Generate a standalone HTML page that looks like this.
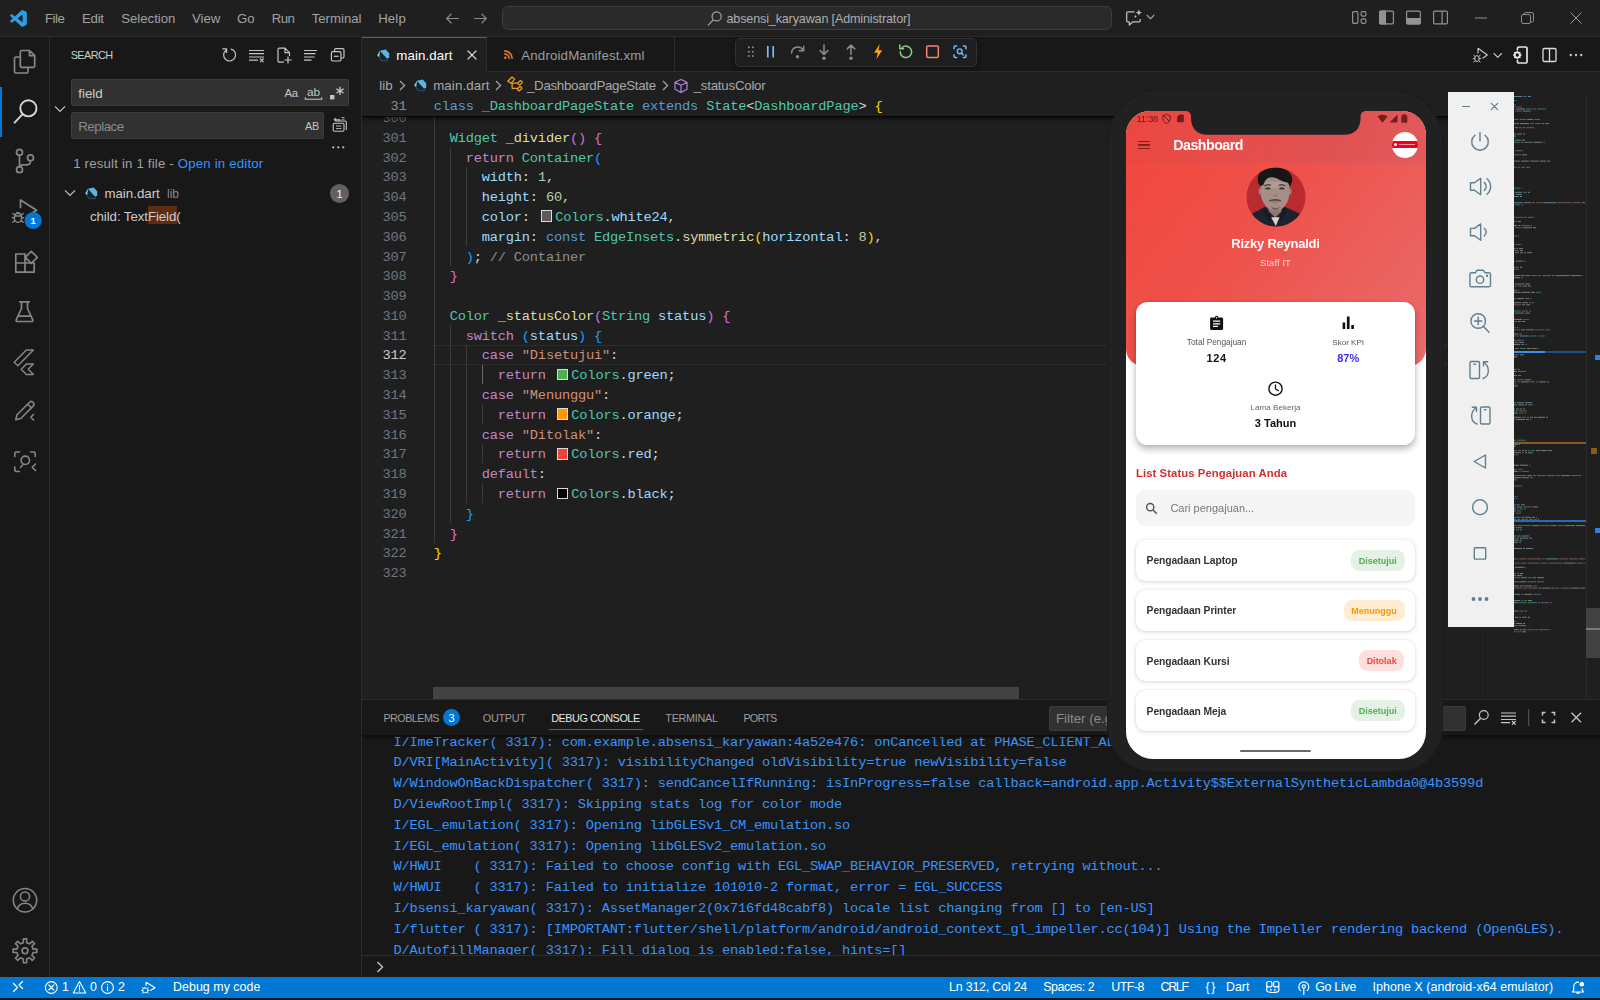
<!DOCTYPE html>
<html lang="en">
<head>
<meta charset="utf-8">
<title>absensi_karyawan - Visual Studio Code</title>
<style>
*{box-sizing:border-box;margin:0;padding:0}
html,body{width:1600px;height:1000px;overflow:hidden;background:#1f1f1f}
body{position:relative;font-family:"Liberation Sans",sans-serif;font-size:13px;color:#ccc;-webkit-font-smoothing:antialiased}
.abs{position:absolute}
svg{display:block;overflow:visible}
.t{position:absolute;white-space:pre;line-height:1}
/* ---------- title bar ---------- */
#titlebar{position:absolute;left:0;top:0;width:1600px;height:37px;background:#1f1f1f;border-bottom:1px solid #2b2b2b}
#titlebar .menu{position:absolute;top:12.2px;font-size:13.2px;color:#a2a2a2;line-height:14px;white-space:pre}
#cmd{position:absolute;left:502px;top:6px;width:610px;height:24px;border:1px solid #3d3d3d;border-radius:6px;background:#2a2a2a}
/* ---------- activity bar ---------- */
#activity{position:absolute;left:0;top:37px;width:50px;height:940px;background:#181818;border-right:1px solid #2b2b2b}
/* ---------- sidebar ---------- */
#sidebar{position:absolute;left:50px;top:37px;width:312px;height:940px;background:#181818;border-right:1px solid #2b2b2b}
.inp{position:absolute;background:#313131;border:1px solid #3c3c3c;border-radius:2px}
/* ---------- editor ---------- */
#tabs{position:absolute;left:362px;top:37px;width:1238px;height:35px;background:#181818;border-bottom:1px solid #2b2b2b}
#editor{position:absolute;left:362px;top:72px;width:1238px;height:627px;background:#1f1f1f;overflow:hidden}
.code{font-family:"Liberation Mono",monospace;font-size:13.7px;letter-spacing:-.201px;white-space:pre;line-height:19.79px;color:#d4d4d4}
.ln{position:absolute;left:0;width:44.5px;text-align:right;color:#6e7681;font-family:"Liberation Mono",monospace;font-size:13.7px;letter-spacing:-.201px;line-height:19.79px;white-space:pre}
.cl{position:absolute;left:71.7px;height:19.79px}
.k{color:#569cd6}.c{color:#4ec9b0}.f{color:#dcdcaa}.p{color:#c586c0}.v{color:#9cdcfe}.n{color:#b5cea8}.s{color:#ce9178}
.b1{color:#ffd700}.b2{color:#da70d6}.b3{color:#179fff}.cm{color:#8e8e8e}
.sw{display:inline-block;width:11.7px;height:11.7px;border:1.2px solid #dcdcdc;vertical-align:-1.2px;margin:0 2.9px 0 2.9px}
.g{position:absolute;width:1px;background:#3a3a3a}
/* ---------- panel ---------- */
#panel{position:absolute;left:362px;top:699px;width:1238px;height:278px;background:#181818;border-top:1px solid #2b2b2b;overflow:hidden}
.ptab{position:absolute;top:11.5px;font-size:10.8px;color:#9d9d9d;line-height:13px;white-space:pre}
.con{position:absolute;left:31.4px;font-family:"Liberation Mono",monospace;font-size:13.7px;letter-spacing:-.201px;line-height:20.83px;white-space:pre;color:#3794ff}
/* ---------- status ---------- */
#status{position:absolute;left:0;top:977px;width:1600px;height:23px;background:#0078d4;color:#fff;border-bottom:2px solid #15181c}
#status .s{position:absolute;top:4px;font-size:12.4px;line-height:13px;color:#fff;white-space:pre}
/* ---------- phone ---------- */
#phone{position:absolute;left:1108px;top:90px;width:334px;height:681px;background:#212121;border-radius:52px 52px 44px 44px;box-shadow:0 0 0 1px #1b1b1b}
#screen{will-change:transform;position:absolute;left:18px;top:22.5px;width:300px;height:647px;background:#fff;border-radius:24px 24px 27px 27px;overflow:hidden;font-family:"Liberation Sans",sans-serif}
#emu{position:absolute;left:1448px;top:92px;width:66px;height:535px;background:#f0f0f0}
</style>
</head>
<body>
<div id="titlebar">
  <svg class="abs" style="left:10px;top:9.5px" width="16.8" height="16.8" viewBox="0 0 100 100"><path fill-rule="evenodd" fill="#2a9fe9" d="M70.9 99.3c1.6.6 3.4.6 5-.2l20.6-9.9c2.1-1 3.5-3.2 3.5-5.6V16.4c0-2.4-1.4-4.6-3.5-5.6L75.9.9c-2.1-1-4.6-.8-6.4.6-.3.2-.5.4-.7.6L29.4 38 12.2 25c-1.6-1.2-3.8-1.1-5.3.2l-5.5 5c-1.8 1.7-1.8 4.5 0 6.2L16.200 50 1.400 63.600c-1.800 1.600-1.800 4.500 0 6.100l5.500 5c1.500 1.400 3.700 1.500 5.300.3l17.200-13L68.800 97.900c.600.600 1.300 1.100 2.100 1.400zM75 27.300L45.100 50 75 72.700z"/></svg>
  <span class="menu" style="left:45px;letter-spacing:-.45px">File</span>
  <span class="menu" style="left:82px;letter-spacing:-.24px">Edit</span>
  <span class="menu" style="left:121.2px">Selection</span>
  <span class="menu" style="left:192px">View</span>
  <span class="menu" style="left:237px">Go</span>
  <span class="menu" style="left:271.7px;letter-spacing:-.57px">Run</span>
  <span class="menu" style="left:311.7px">Terminal</span>
  <span class="menu" style="left:378.2px;letter-spacing:.16px">Help</span>
  <svg class="abs" style="left:444px;top:10px" width="17" height="17" viewBox="0 0 16 16" fill="none" stroke="#8a8a8a" stroke-width="1.1"><path d="M14 8H2.500M7 3.500L2.500 8 7 12.500"/></svg>
  <svg class="abs" style="left:471.500px;top:10px" width="17" height="17" viewBox="0 0 16 16" fill="none" stroke="#8a8a8a" stroke-width="1.1"><path d="M2 8h11.500M9 3.500L13.500 8 9 12.500"/></svg>
  <div id="cmd">
    <svg class="abs" style="left:203px;top:3px" width="17" height="17" viewBox="0 0 16 16" fill="none" stroke="#a8a8a8" stroke-width="1.1"><circle cx="10" cy="6" r="4.300"/><path d="M7 9.200L1.800 14.500"/></svg>
    <span class="t" style="left:223.500px;top:4.500px;font-size:12.600px;color:#adadad;line-height:14px;letter-spacing:-.16px">absensi_karyawan [Administrator]</span>
  </div>
  <!-- copilot chat icon -->
  <svg class="abs" style="left:1125px;top:8.500px" width="18" height="18" viewBox="0 0 16 16" fill="none" stroke="#c0c0c0" stroke-width="1.100" stroke-linejoin="round"><path d="M8.500 2.500H2.500a1 1 0 0 0-1 1v7a1 1 0 0 0 1 1h1.300v2.800l3-2.800h5.700a1 1 0 0 0 1-1V8.800"/><path fill="#c0c0c0" stroke="none" d="M12.300.400l.8 2 2 .8-2 .8-.8 2-.8-2-2-.8 2-.8z"/><path fill="#c0c0c0" stroke="none" d="M9.300 5.200l.4 1 .9.400-.9.400-.4 1-.4-1-.9-.400.9-.400z"/></svg>
  <svg class="abs" style="left:1146px;top:14px" width="9" height="6" viewBox="0 0 9 6" fill="none" stroke="#a0a0a0" stroke-width="1.100"><path d="M.8 1l3.700 3.700L8.200 1"/></svg>
  <!-- layout icons -->
  <svg class="abs" style="left:1351px;top:9px" width="17" height="17" viewBox="0 0 16 16" fill="none" stroke="#939393" stroke-width="1.100"><rect x="1.500" y="2.500" width="5" height="11" rx="1.200"/><rect x="9.500" y="2.500" width="4.600" height="4.200" rx="1.400"/><rect x="9.500" y="9.300" width="4.600" height="4.200" rx="1.400"/></svg>
  <svg class="abs" style="left:1378px;top:9px" width="17" height="17" viewBox="0 0 16 16" fill="none" stroke="#939393" stroke-width="1.100"><rect x="1.500" y="2" width="13" height="12" rx="1.200"/><path fill="#939393" d="M1.500 3.200a1.200 1.200 0 0 1 1.200-1.200H7v12H2.700a1.200 1.200 0 0 1-1.200-1.200z"/></svg>
  <svg class="abs" style="left:1405px;top:9px" width="17" height="17" viewBox="0 0 16 16" fill="none" stroke="#939393" stroke-width="1.100"><rect x="1.500" y="2" width="13" height="12" rx="1.200"/><path fill="#939393" d="M1.500 9h13v3.800a1.200 1.200 0 0 1-1.200 1.200H2.700a1.200 1.200 0 0 1-1.200-1.200z"/></svg>
  <svg class="abs" style="left:1432px;top:9px" width="17" height="17" viewBox="0 0 16 16" fill="none" stroke="#939393" stroke-width="1.100"><rect x="1.500" y="2" width="13" height="12" rx="1.200"/><path d="M9.500 2v12"/></svg>
  <!-- window controls -->
  <svg class="abs" style="left:1475px;top:17px" width="12" height="2" viewBox="0 0 12 2"><path d="M0 1h12" stroke="#8c8c8c" stroke-width="1"/></svg>
  <svg class="abs" style="left:1521px;top:11.500px" width="13" height="12" viewBox="0 0 13 12" fill="none" stroke="#8c8c8c" stroke-width="1"><rect x=".5" y="2.500" width="9" height="9" rx="1.500"/><path d="M3 2.500V2A1.500 1.500 0 0 1 4.500.5H11A1.500 1.500 0 0 1 12.500 2v6.500A1.500 1.500 0 0 1 11 10h-1"/></svg>
  <svg class="abs" style="left:1570px;top:12px" width="12" height="12" viewBox="0 0 12 12" fill="none" stroke="#9a9a9a" stroke-width="1"><path d="M.5.500l11 11M11.500.500l-11 11"/></svg>
</div>

<div id="activity">
  <div class="abs" style="left:0;top:50px;width:2px;height:50px;background:#0078d4"></div>
  <svg class="abs" style="left:0;top:0" width="50" height="940" viewBox="0 0 50 940" fill="none" stroke="#868686" stroke-width="1.7" stroke-linejoin="round" stroke-linecap="round">
    <!-- explorer -->
    <path d="M22 13.500H29.500L34.700 18.700V28.800a1.500 1.500 0 0 1-1.500 1.500H21.800a1.500 1.500 0 0 1-1.500-1.500V15a1.500 1.500 0 0 1 1.500-1.500zM29.500 13.500V18.700H34.700M20.300 20H16a1.500 1.500 0 0 0-1.500 1.500V34.500a1.500 1.500 0 0 0 1.500 1.500H26.500a1.500 1.500 0 0 0 1.500-1.500V30.300"/>
    <!-- search (active) -->
    <g stroke="#d7d7d7" stroke-width="1.900"><circle cx="28.400" cy="71.300" r="8.100"/><path d="M22.600 77.200L14.600 85.600"/></g>
    <!-- scm -->
    <circle cx="19.500" cy="115.300" r="3"/><circle cx="30.500" cy="120.800" r="3"/><circle cx="19.500" cy="132.700" r="3"/>
    <path d="M19.500 118.300V129.700M30.500 123.800v.4q0 3.600-4 3.600h-3q-4 0-4 2"/>
    <!-- debug -->
    <path d="M20.500 170.500V163L36.600 173.200L32.500 175.800"/>
    <g stroke-width="1.400"><ellipse cx="18" cy="180.800" rx="3.600" ry="4.600"/><path d="M14.400 180.800H12.300M21.600 180.800H23.700M14.800 178L12.800 176.500M21.200 178L23.200 176.500M14.800 183.600L12.800 185.300M21.200 183.600L23.200 185.300M16 176.800A2.200 2.200 0 0 1 20 176.800M14.600 179h6.800"/></g>
    <circle cx="33.200" cy="183.500" r="8.600" fill="#0078d4" stroke="none"/>
    <!-- extensions -->
    <path d="M15.800 217H25V226H15.800zM15.800 226H25V235.200H15.800zM25 226H34.200V235.200H25zM31.300 214.300L37.300 220.300L31.300 226.300L25.300 220.300z"/>
    <!-- testing beaker -->
    <path d="M19.700 264.800H29.300M21.500 264.800V271.500L16.200 282.800a1.200 1.200 0 0 0 1.100 1.700H31.700a1.200 1.200 0 0 0 1.100-1.700L27.500 271.500V264.800M18 279.200H31"/>
    <!-- flutter -->
    <path d="M14.200 325.200L26.300 313H33.400L17.800 328.800zM21.200 332.300L26.400 337.500H33.400L28.200 332.300L33.400 327H26.400z" stroke-width="1.500"/>
    <!-- pencil sparkle -->
    <path d="M15.800 382.800L17 377.800L29.600 365.200a2.200 2.200 0 0 1 3.100 0l.6.600a2.200 2.200 0 0 1 0 3.100L20.800 381.500zM27.600 367.200L31.200 370.800M33.500 377.500L30.800 380.300L33.500 383" stroke-width="1.600"/>
    <!-- inspect person -->
    <path d="M14.800 419.500V416.500a1.500 1.500 0 0 1 1.500-1.500H19.500M30.500 415H33.700a1.500 1.500 0 0 1 1.500 1.500V419.500M14.800 430V433a1.500 1.500 0 0 0 1.500 1.500H19.500M20.500 430.500L22.800 427.800M35.500 427L32.200 430.300L35.500 433.500" stroke-width="1.600"/><circle cx="25.300" cy="423.300" r="4.200" stroke-width="1.600"/>
    <!-- account -->
    <g stroke-width="1.500"><circle cx="25" cy="863.300" r="11.700"/><circle cx="25" cy="859.500" r="4.600"/><path d="M17.200 872a8.200 8.200 0 0 1 15.600 0"/></g>
    <!-- gear -->
    <path stroke-width="1.600" d="M23.310 905.670 L23.340 901.910 L26.660 901.910 L26.690 905.670 L29.550 906.860 L32.230 904.220 L34.580 906.570 L31.940 909.250 L33.130 912.110 L36.890 912.140 L36.890 915.460 L33.130 915.490 L31.940 918.350 L34.580 921.030 L32.230 923.380 L29.550 920.740 L26.690 921.930 L26.660 925.690 L23.340 925.690 L23.310 921.930 L20.450 920.740 L17.770 923.380 L15.420 921.030 L18.060 918.350 L16.870 915.490 L13.110 915.460 L13.110 912.140 L16.870 912.110 L18.060 909.250 L15.420 906.570 L17.770 904.220 L20.450 906.860z"/><circle cx="25" cy="913.800" r="2.900" stroke-width="1.600"/>
  </svg>
  <span class="t" style="left:30.500px;top:178.500px;font-size:9.500px;font-weight:bold;color:#fff;line-height:10px">1</span>
</div>

<div id="sidebar">
  <div class="inp" style="left:21px;top:42px;width:278px;height:27px"></div>
  <div class="inp" style="left:21px;top:75px;width:253px;height:27px"></div>
  <span class="t" style="left:20.700px;top:11.500px;font-size:10.900px;color:#ccc;line-height:12px;letter-spacing:-.6px">SEARCH</span>
  <svg class="abs" style="left:160px;top:0" width="152" height="120" viewBox="210 37 152 120" fill="none" stroke="#c5c5c5" stroke-width="1.200">
    <!-- refresh -->
    <path d="M226 50.200A6 6 0 1 0 231.200 49.200M222.800 48.800H226.600V52.600" stroke-linecap="round" stroke-linejoin="round"/>
    <!-- clear all -->
    <path d="M249 50.500h15M249 53.700h15M249 57h15M249 60.200h9M260 58.500l3.600 3.600M263.600 58.500l-3.600 3.600"/>
    <!-- new file -->
    <path d="M284 62.200H279.200a1.200 1.200 0 0 1-1.200-1.200V49.400a1.200 1.200 0 0 1 1.200-1.200H285l4.500 4.500V56M285 48.200V52.700H289.500M288 56.500V63.500M284.500 60H291.500"/>
    <!-- collapse lines -->
    <path d="M304 50.500h13M304 53.700h11.500M304 57h10.500M304 60.200h7.500"/>
    <!-- collapse all -->
    <path d="M334.500 51V50a1.400 1.400 0 0 1 1.400-1.400H342.600a1.400 1.400 0 0 1 1.400 1.400V56.600a1.400 1.400 0 0 1-1.400 1.400H341.500"/><rect x="331.400" y="51.600" width="9.600" height="9.400" rx="1.400"/><path d="M333.800 56.300H338.600"/>
    <!-- regex square -->
    <rect x="330" y="95" width="4.400" height="4.400" fill="#c5c5c5" stroke="none"/>
    <path d="M340 86.800V95M336.400 88.900L343.600 93M343.600 88.900L336.400 93" stroke-width="1.300"/>
    <!-- whole word bracket -->
    <path d="M305.300 97.200V99.200H321.700V97.200" stroke-width="1.100"/>
    <!-- replace all -->
    <g stroke-width="1.100"><rect x="333.200" y="123.300" width="10.800" height="8" rx="1.200"/><path d="M346.300 130V122.200a1.200 1.200 0 0 0-1.200-1.200H336M336 118.200L334.300 119.700L336 121.200M334.500 119.700H340.500"/><path d="M336 126h5.500M336 128.600h5.500" stroke-width=".9"/><path d="M341.500 117.500h3M342 119.300h2.500" stroke-width=".8"/></g>
    <!-- more -->
    <g fill="#c5c5c5" stroke="none"><circle cx="333.300" cy="147.300" r="1.100"/><circle cx="338.300" cy="147.300" r="1.100"/><circle cx="343.300" cy="147.300" r="1.100"/></g>
  </svg>
  <!-- toggle chevron -->
  <svg class="abs" style="left:4px;top:68px" width="12" height="8" viewBox="0 0 12 8" fill="none" stroke="#c5c5c5" stroke-width="1.200"><path d="M1 1.300l5 5 5-5"/></svg>
  <span class="t" style="left:28.200px;top:48.500px;font-size:13.400px;color:#ccc;line-height:15px">field</span>
  <span class="t" style="left:234.400px;top:50px;font-size:11.400px;color:#c5c5c5;line-height:12px;letter-spacing:-.2px">Aa</span>
  <span class="t" style="left:257px;top:49.300px;font-size:11.800px;color:#c5c5c5;line-height:12px">ab</span>
  <span class="t" style="left:28.200px;top:81.500px;font-size:13.400px;color:#8a8a8a;line-height:15px;letter-spacing:-.51px">Replace</span>
  <span class="t" style="left:255px;top:83px;font-size:10.800px;color:#c5c5c5;line-height:12px;letter-spacing:-.2px">AB</span>
  <span class="t" style="left:23.200px;top:118.600px;font-size:13.200px;color:#a0a0a0;line-height:15px;letter-spacing:.2px">1 result in 1 file - <span style="color:#3794ff">Open in editor</span></span>
  <!-- result file row -->
  <svg class="abs" style="left:13.500px;top:152px" width="12" height="8" viewBox="0 0 12 8" fill="none" stroke="#c5c5c5" stroke-width="1.200"><path d="M1 1.300l5 5 5-5"/></svg>
  <svg class="abs" style="left:34.700px;top:150px" width="12.500" height="12.500"><use href="#dart"/></svg>
  <span class="t" style="left:54.400px;top:148.500px;font-size:13.300px;color:#ccc;line-height:15px">main.dart</span>
  <span class="t" style="left:117px;top:149.500px;font-size:12px;color:#8b8b8b;line-height:14px">lib</span>
  <div class="abs" style="left:280px;top:147px;width:19px;height:19px;border-radius:50%;background:#616161"></div>
  <span class="t" style="left:286.600px;top:151px;font-size:11px;color:#f8f8f8;line-height:12px">1</span>
  <div class="abs" style="left:98.300px;top:169px;width:28.500px;height:17.500px;background:#5d2d0e"></div>
  <span class="t" style="left:40px;top:171.600px;font-size:13.300px;color:#ccc;line-height:15px;letter-spacing:-.09px">child: TextField(</span>
</div>

<svg width="0" height="0" style="position:absolute"><defs>
  <symbol id="dart" viewBox="0 0 13 13"><path d="M2.900 1.900L9.100.500L12.900 4.800V9.400L10.200 9.900z" fill="#5ab6e6"/><path d="M3 1.800L.200 6.500L2.300 8.900L3.100 2.600z" fill="#7ccdf0"/><path d="M2.300 8.900L4.700 12.300H10.300L10.800 9.900" fill="none" stroke="#2f5a70" stroke-width="1.100"/><path d="M3.100 2.600L10.200 9.900L4.700 12z" fill="#1d262c" opacity=".6"/></symbol>
</defs></svg>
<div id="tabs">
  <div class="abs" style="left:0;top:0;width:125px;height:35px;background:#1f1f1f;border-top:1px solid #0078d4;border-right:1px solid #2b2b2b"></div>
  <svg class="abs" style="left:14.500px;top:11.500px" width="12.500" height="12.500"><use href="#dart"/></svg>
  <span class="t" style="left:34.300px;top:11px;font-size:13.300px;color:#fff;line-height:15px;letter-spacing:.1px">main.dart</span>
  <svg class="abs" style="left:105px;top:13px" width="10" height="10" viewBox="0 0 10 10" fill="none" stroke="#e0e0e0" stroke-width="1.300"><path d="M.6.600l8.800 8.800M9.400.600L.600 9.400"/></svg>
  <div class="abs" style="left:125px;top:0;width:187.500px;height:34px;border-right:1px solid #2b2b2b"></div>
  <svg class="abs" style="left:141.500px;top:12.500px" width="9" height="9" viewBox="0 0 9 9" fill="none" stroke="#e37933" stroke-width="1.700"><circle cx="1.300" cy="7.700" r="1.300" fill="#e37933" stroke="none"/><path d="M.2 3.800A5 5 0 0 1 5.200 8.800M.200.800A8 8 0 0 1 8.200 8.800"/></svg>
  <span class="t" style="left:159.300px;top:11px;font-size:13.300px;color:#9d9d9d;line-height:15px;letter-spacing:.145px">AndroidManifest.xml</span>
  <!-- debug toolbar -->
  <div class="abs" style="left:372.500px;top:.5px;width:242.500px;height:29.500px;background:#1e1e1e;border:1px solid #333;border-radius:5px;box-shadow:0 1px 4px rgba(0,0,0,.45)"></div>
  <svg class="abs" style="left:372px;top:0" width="244" height="30" viewBox="734 37 244 30" fill="none" stroke-width="1.500" stroke-linecap="round" stroke-linejoin="round">
    <g fill="#8a8a8a" stroke="none"><circle cx="748.800" cy="47.300" r="1"/><circle cx="752.800" cy="47.300" r="1"/><circle cx="748.800" cy="51.700" r="1"/><circle cx="752.800" cy="51.700" r="1"/><circle cx="748.800" cy="56.100" r="1"/><circle cx="752.800" cy="56.100" r="1"/></g>
    <path d="M767.800 46V57.500M773.200 46V57.500" stroke="#75beff" stroke-width="1.700" stroke-linecap="butt"/>
    <g stroke="#8a8a8a"><path d="M791.500 53A6.200 6.200 0 0 1 803.200 50.500M803.700 46.300V50.800H799.200"/><circle cx="797.500" cy="56.800" r="1.700" fill="#8a8a8a" stroke="none"/>
    <path d="M824 45V54.300M820.200 50.600L824 54.400L827.800 50.600"/><circle cx="824" cy="58.300" r="1.700" fill="#8a8a8a" stroke="none"/>
    <path d="M851 54.500V45.200M847.200 48.900L851 45.100L854.800 48.900"/><circle cx="851" cy="58.300" r="1.700" fill="#8a8a8a" stroke="none"/></g>
    <path d="M879.800 44L874.200 52.800H877.800L876.300 59.500L882.200 50.200H878.500z" fill="#ffa319" stroke="none"/>
    <path d="M900.200 51.800A5.700 5.700 0 1 0 902.200 47.500M899.800 45V48.700H903.500" stroke="#89d185"/>
    <rect x="926.700" y="46" width="11.600" height="11.600" rx="1.300" stroke="#f48771"/>
    <g stroke="#75beff" stroke-width="1.400"><path d="M954 48.700V47.200a1.200 1.200 0 0 1 1.200-1.200H956.700M963.300 46H964.800a1.200 1.200 0 0 1 1.200 1.200V48.700M966 54.800V56.300a1.200 1.200 0 0 1-1.200 1.200H963.300M956.700 57.500H955.200a1.200 1.200 0 0 1-1.200-1.200V54.800"/><circle cx="959.700" cy="51.300" r="2.400"/><path d="M961.500 53.100L963.300 54.900"/></g>
  </svg>
  <!-- editor actions -->
  <svg class="abs" style="left:1108px;top:6px" width="130" height="24" viewBox="1470 43 130 24" fill="none" stroke="#c5c5c5" stroke-width="1.200" stroke-linejoin="round" stroke-linecap="round">
    <path d="M1478 53V48.300L1487.300 55L1483 58"/><g stroke-width="1"><ellipse cx="1477" cy="58.600" rx="2.300" ry="3"/><path d="M1474.700 58.600H1473.200M1479.300 58.600H1480.800M1475 56.300L1473.800 55.300M1479 56.300L1480.200 55.300M1475 61L1473.800 62M1479 61L1480.200 62"/></g>
    <path d="M1494 53.500L1497.800 57.300L1501.600 53.500" stroke-width="1.100"/>
    <path d="M1517.500 49.500V48.200a1.200 1.200 0 0 1 1.200-1.200H1525.800a1.200 1.200 0 0 1 1.200 1.200V61.800a1.200 1.200 0 0 1-1.200 1.200H1518.700a1.200 1.200 0 0 1-1.200-1.200V60.500" stroke="#e4e4e4" stroke-width="1.700"/><circle cx="1517.300" cy="55" r="2.600" stroke="#e4e4e4" stroke-width="1.900"/><path d="M1517.300 51.300V52.300M1517.300 57.700V58.700M1513.600 55H1514.600M1520 55H1521M1514.700 52.400L1515.400 53.100M1519.200 56.900L1519.900 57.600M1514.700 57.600L1515.400 56.900M1519.200 53.100L1519.900 52.400" stroke="#e4e4e4" stroke-width="1.400"/>
    <rect x="1543" y="48.500" width="13" height="13" rx="1.300" stroke="#dcdcdc" stroke-width="1.300"/><path d="M1549.500 48.500V61.500" stroke="#dcdcdc" stroke-width="1.300"/>
    <g fill="#c5c5c5" stroke="none"><circle cx="1570.800" cy="55" r="1.200"/><circle cx="1576" cy="55" r="1.200"/><circle cx="1581.200" cy="55" r="1.200"/></g>
  </svg>
</div>

<div id="editor">
<div class="abs" style="left:71px;top:272.8px;width:1081px;height:19.79px;border-top:1px solid #2c2c2c;border-bottom:1px solid #2c2c2c"></div>
<div class="ln" style="top:37.01px;color:#6e7681">300</div>
<div class="ln" style="top:56.80px;color:#6e7681">301</div>
<div class="ln" style="top:76.59px;color:#6e7681">302</div>
<div class="ln" style="top:96.38px;color:#6e7681">303</div>
<div class="ln" style="top:116.17px;color:#6e7681">304</div>
<div class="ln" style="top:135.96px;color:#6e7681">305</div>
<div class="ln" style="top:155.75px;color:#6e7681">306</div>
<div class="ln" style="top:175.54px;color:#6e7681">307</div>
<div class="ln" style="top:195.33px;color:#6e7681">308</div>
<div class="ln" style="top:215.12px;color:#6e7681">309</div>
<div class="ln" style="top:234.91px;color:#6e7681">310</div>
<div class="ln" style="top:254.70px;color:#6e7681">311</div>
<div class="ln" style="top:274.49px;color:#cccccc">312</div>
<div class="ln" style="top:294.28px;color:#6e7681">313</div>
<div class="ln" style="top:314.07px;color:#6e7681">314</div>
<div class="ln" style="top:333.86px;color:#6e7681">315</div>
<div class="ln" style="top:353.65px;color:#6e7681">316</div>
<div class="ln" style="top:373.44px;color:#6e7681">317</div>
<div class="ln" style="top:393.23px;color:#6e7681">318</div>
<div class="ln" style="top:413.02px;color:#6e7681">319</div>
<div class="ln" style="top:432.81px;color:#6e7681">320</div>
<div class="ln" style="top:452.60px;color:#6e7681">321</div>
<div class="ln" style="top:472.39px;color:#6e7681">322</div>
<div class="ln" style="top:492.18px;color:#6e7681">323</div>
<div class="cl code" style="top:56.80px">  <span class="c">Widget</span> <span class="f">_divider</span><span class="b2">()</span> <span class="b2">{</span></div>
<div class="cl code" style="top:76.59px">    <span class="p">return</span> <span class="c">Container</span><span class="b3">(</span></div>
<div class="cl code" style="top:96.38px">      <span class="v">width</span>: <span class="n">1</span>,</div>
<div class="cl code" style="top:116.17px">      <span class="v">height</span>: <span class="n">60</span>,</div>
<div class="cl code" style="top:135.96px">      <span class="v">color</span>: <i class="sw" style="background:#5a5a5a"></i><span class="c">Colors</span>.<span class="v">white24</span>,</div>
<div class="cl code" style="top:155.75px">      <span class="v">margin</span>: <span class="k">const</span> <span class="c">EdgeInsets</span>.<span class="f">symmetric</span><span class="b1">(</span><span class="v">horizontal</span>: <span class="n">8</span><span class="b1">)</span>,</div>
<div class="cl code" style="top:175.54px">    <span class="b3">)</span>; <span class="cm">// Container</span></div>
<div class="cl code" style="top:195.33px">  <span class="b2">}</span></div>
<div class="cl code" style="top:234.91px">  <span class="c">Color</span> <span class="f">_statusColor</span><span class="b2">(</span><span class="c">String</span> <span class="v">status</span><span class="b2">)</span> <span class="b2">{</span></div>
<div class="cl code" style="top:254.70px">    <span class="p">switch</span> <span class="b3">(</span><span class="v">status</span><span class="b3">)</span> <span class="b3">{</span></div>
<div class="cl code" style="top:274.49px">      <span class="p">case</span> <span class="s">&quot;Disetujui&quot;</span>:</div>
<div class="cl code" style="top:294.28px">        <span class="p">return</span> <i class="sw" style="background:#4caf50"></i><span class="c">Colors</span>.<span class="v">green</span>;</div>
<div class="cl code" style="top:314.07px">      <span class="p">case</span> <span class="s">&quot;Menunggu&quot;</span>:</div>
<div class="cl code" style="top:333.86px">        <span class="p">return</span> <i class="sw" style="background:#ff9800"></i><span class="c">Colors</span>.<span class="v">orange</span>;</div>
<div class="cl code" style="top:353.65px">      <span class="p">case</span> <span class="s">&quot;Ditolak&quot;</span>:</div>
<div class="cl code" style="top:373.44px">        <span class="p">return</span> <i class="sw" style="background:#f44336"></i><span class="c">Colors</span>.<span class="v">red</span>;</div>
<div class="cl code" style="top:393.23px">      <span class="p">default</span>:</div>
<div class="cl code" style="top:413.02px">        <span class="p">return</span> <i class="sw" style="background:#000000"></i><span class="c">Colors</span>.<span class="v">black</span>;</div>
<div class="cl code" style="top:432.81px">    <span class="b3">}</span></div>
<div class="cl code" style="top:452.60px">  <span class="b2">}</span></div>
<div class="cl code" style="top:472.39px"><span class="b1">}</span></div>
<div class="g" style="left:71.8px;top:35.3px;height:435.4px;background:#3b3b3b"></div>
<div class="g" style="left:87.8px;top:74.9px;height:118.7px;background:#3b3b3b"></div>
<div class="g" style="left:103.8px;top:94.7px;height:79.2px;background:#3b3b3b"></div>
<div class="g" style="left:87.8px;top:253.0px;height:197.9px;background:#3b3b3b"></div>
<div class="g" style="left:103.8px;top:272.8px;height:158.3px;background:#3b3b3b"></div>
<div class="g" style="left:119.9px;top:292.6px;height:19.8px;background:#6a6a6a"></div>
<div class="g" style="left:119.9px;top:332.2px;height:19.8px;background:#3b3b3b"></div>
<div class="g" style="left:119.9px;top:371.7px;height:19.8px;background:#3b3b3b"></div>
<div class="g" style="left:119.9px;top:411.3px;height:19.8px;background:#3b3b3b"></div>
<div class="abs" style="left:0;top:23px;width:1152px;height:20.500px;background:#1f1f1f;box-shadow:0 1px 0 rgba(0,0,0,.75),0 3px 4px rgba(0,0,0,.6)"></div>
<div class="abs" style="left:0;top:0;width:1238px;height:23px;background:#1f1f1f"></div>
<span class="t" style="left:17.300px;top:6px;font-size:13.300px;color:#a9a9a9;line-height:15px">lib</span>
<svg class="abs" style="left:37.300px;top:8.300px" width="7" height="11" viewBox="0 0 7 11" fill="none" stroke="#a9a9a9" stroke-width="1.200"><path d="M1 1l4.600 4.500L1 10"/></svg>
<svg class="abs" style="left:52.300px;top:7.300px" width="12.500" height="12.500"><use href="#dart"/></svg>
<span class="t" style="left:71.200px;top:6px;font-size:13.300px;color:#a9a9a9;line-height:15px;letter-spacing:.1px">main.dart</span>
<svg class="abs" style="left:132.800px;top:8.300px" width="7" height="11" viewBox="0 0 7 11" fill="none" stroke="#a9a9a9" stroke-width="1.200"><path d="M1 1l4.600 4.500L1 10"/></svg>
<svg class="abs" style="left:140px;top:0" width="24" height="23" viewBox="140 0 24 23" fill="none" stroke="#ee9d28" stroke-width="1.250" stroke-linejoin="round"><path d="M145.800 9.200L150 5L152.700 7.200L148.900 11.300z"/><path d="M149.800 11.200H156M150.100 11.200V16.300H155.600"/><rect x="-2.100" y="-1.400" width="4.200" height="2.800" rx=".5" transform="translate(158 10.800) rotate(-45)"/><rect x="-2.100" y="-1.400" width="4.200" height="2.800" rx=".5" transform="translate(157.600 16.600) rotate(-45)"/></svg>
<span class="t" style="left:165px;top:6px;font-size:13.300px;color:#a9a9a9;line-height:15px;letter-spacing:-.3px">_DashboardPageState</span>
<svg class="abs" style="left:299.800px;top:8.300px" width="7" height="11" viewBox="0 0 7 11" fill="none" stroke="#a9a9a9" stroke-width="1.200"><path d="M1 1l4.600 4.500L1 10"/></svg>
<svg class="abs" style="left:311px;top:5.500px" width="16" height="16" viewBox="0 0 16 16" fill="none" stroke="#b180d7" stroke-width="1.200" stroke-linejoin="round"><path d="M8 1.500L14 4.300V11.300L8 14.500L2 11.300V4.300zM2 4.300L8 7.300L14 4.300M8 7.300V14.500"/></svg>
<span class="t" style="left:331.700px;top:6px;font-size:13.300px;color:#a9a9a9;line-height:15px;letter-spacing:-.24px">_statusColor</span>
<div class="ln" style="top:25.200px;color:#858b92">31</div>
<div class="cl code" style="top:25.200px"><span class="k">class</span> <span class="c">_DashboardPageState</span> <span class="k">extends</span> <span class="c">State</span>&lt;<span class="c">DashboardPage</span>&gt; <span class="b1">{</span></div>

<div class="abs" style="left:71.4px;top:615px;width:585.6px;height:12.4px;background:#434343"></div>
<svg class="abs" style="left:1152px;top:0" width="72" height="627" viewBox="0 0 72 627" opacity=".5"><rect x="0.0" y="24.0" width="8.0" height="1" fill="#9cdcfe"/><rect x="9.0" y="24.0" width="4.0" height="1" fill="#569cd6"/><rect x="14.0" y="24.0" width="3.0" height="1" fill="#9cdcfe"/><rect x="0.0" y="28.2" width="1.0" height="1" fill="#d4d4d4"/><rect x="2.0" y="28.2" width="1.0" height="1" fill="#4ec9b0"/><rect x="0.0" y="32.3" width="2.0" height="1" fill="#c586c0"/><rect x="0.0" y="34.4" width="8.0" height="1" fill="#569cd6"/><rect x="0.0" y="36.5" width="1.0" height="1" fill="#ce9178"/><rect x="2.0" y="36.5" width="9.0" height="1" fill="#d4d4d4"/><rect x="12.0" y="36.5" width="6.0" height="1" fill="#4ec9b0"/><rect x="19.0" y="36.5" width="3.0" height="1" fill="#c586c0"/><rect x="23.0" y="36.5" width="9.0" height="1" fill="#4ec9b0"/><rect x="1.0" y="38.6" width="7.0" height="1" fill="#ce9178"/><rect x="9.0" y="38.6" width="7.0" height="1" fill="#9cdcfe"/><rect x="17.0" y="38.6" width="1.0" height="1" fill="#569cd6"/><rect x="0.0" y="46.9" width="5.0" height="1" fill="#4ec9b0"/><rect x="6.0" y="46.9" width="6.0" height="1" fill="#4ec9b0"/><rect x="13.0" y="46.9" width="6.0" height="1" fill="#d4d4d4"/><rect x="20.0" y="46.9" width="6.0" height="1" fill="#4ec9b0"/><rect x="0.0" y="51.1" width="5.0" height="1" fill="#b5cea8"/><rect x="6.0" y="51.1" width="9.0" height="1" fill="#dcdcaa"/><rect x="16.0" y="51.1" width="4.0" height="1" fill="#4ec9b0"/><rect x="21.0" y="51.1" width="6.0" height="1" fill="#c586c0"/><rect x="28.0" y="51.1" width="2.0" height="1" fill="#d4d4d4"/><rect x="31.0" y="51.1" width="4.0" height="1" fill="#9cdcfe"/><rect x="1.0" y="55.2" width="3.0" height="1" fill="#d4d4d4"/><rect x="5.0" y="55.2" width="3.0" height="1" fill="#c586c0"/><rect x="9.0" y="55.2" width="2.0" height="1" fill="#d4d4d4"/><rect x="12.0" y="55.2" width="8.0" height="1" fill="#c586c0"/><rect x="0.0" y="61.5" width="2.0" height="1" fill="#d4d4d4"/><rect x="3.0" y="61.5" width="5.0" height="1" fill="#9cdcfe"/><rect x="9.0" y="61.5" width="2.0" height="1" fill="#9cdcfe"/><rect x="0.0" y="63.6" width="2.0" height="1" fill="#9cdcfe"/><rect x="1.0" y="67.7" width="6.0" height="1" fill="#dcdcaa"/><rect x="8.0" y="67.7" width="3.0" height="1" fill="#9cdcfe"/><rect x="0.0" y="69.8" width="6.0" height="1" fill="#4ec9b0"/><rect x="7.0" y="69.8" width="2.0" height="1" fill="#d4d4d4"/><rect x="10.0" y="69.8" width="9.0" height="1" fill="#b5cea8"/><rect x="20.0" y="69.8" width="8.0" height="1" fill="#d4d4d4"/><rect x="29.0" y="69.8" width="2.0" height="1" fill="#569cd6"/><rect x="1.0" y="78.2" width="8.0" height="1" fill="#4ec9b0"/><rect x="0.0" y="82.3" width="7.0" height="1" fill="#ce9178"/><rect x="8.0" y="82.3" width="5.0" height="1" fill="#dcdcaa"/><rect x="0.0" y="88.6" width="6.0" height="1" fill="#b5cea8"/><rect x="7.0" y="88.6" width="8.0" height="1" fill="#d4d4d4"/><rect x="16.0" y="88.6" width="9.0" height="1" fill="#9cdcfe"/><rect x="26.0" y="88.6" width="6.0" height="1" fill="#d4d4d4"/><rect x="33.0" y="88.6" width="3.0" height="1" fill="#d4d4d4"/><rect x="0.0" y="94.8" width="3.0" height="1" fill="#ce9178"/><rect x="4.0" y="94.8" width="2.0" height="1" fill="#ce9178"/><rect x="7.0" y="94.8" width="4.0" height="1" fill="#c586c0"/><rect x="12.0" y="94.8" width="4.0" height="1" fill="#4ec9b0"/><rect x="0.0" y="115.7" width="6.0" height="1" fill="#4ec9b0"/><rect x="7.0" y="115.7" width="1.0" height="1" fill="#c586c0"/><rect x="1.0" y="119.8" width="7.0" height="1" fill="#9cdcfe"/><rect x="9.0" y="119.8" width="4.0" height="1" fill="#4ec9b0"/><rect x="14.0" y="119.8" width="2.0" height="1" fill="#9cdcfe"/><rect x="0.0" y="121.9" width="1.0" height="1" fill="#569cd6"/><rect x="2.0" y="121.9" width="6.0" height="1" fill="#9cdcfe"/><rect x="0.0" y="124.0" width="5.0" height="1" fill="#b5cea8"/><rect x="6.0" y="124.0" width="2.0" height="1" fill="#dcdcaa"/><rect x="0.0" y="130.2" width="8.5" height="1" fill="#9cdcfe"/><rect x="9.5" y="130.2" width="7.5" height="1" fill="#9cdcfe"/><rect x="18.0" y="130.2" width="3.0" height="1" fill="#ce9178"/><rect x="22.0" y="130.2" width="6.0" height="1" fill="#ce9178"/><rect x="29.0" y="130.2" width="13.5" height="1" fill="#9cdcfe"/><rect x="43.5" y="130.2" width="13.5" height="1" fill="#ce9178"/><rect x="58.0" y="130.2" width="9.0" height="1" fill="#ce9178"/><rect x="68.0" y="130.2" width="3.0" height="1" fill="#9cdcfe"/><rect x="1.0" y="132.3" width="5.0" height="1" fill="#4ec9b0"/><rect x="7.0" y="132.3" width="2.0" height="1" fill="#c586c0"/><rect x="0.0" y="144.8" width="9.0" height="1" fill="#569cd6"/><rect x="10.0" y="144.8" width="3.0" height="1" fill="#ce9178"/><rect x="14.0" y="144.8" width="6.0" height="1" fill="#c586c0"/><rect x="0.0" y="149.0" width="3.0" height="1" fill="#c586c0"/><rect x="4.0" y="149.0" width="3.0" height="1" fill="#d4d4d4"/><rect x="0.0" y="153.1" width="3.0" height="1" fill="#d4d4d4"/><rect x="4.0" y="153.1" width="2.0" height="1" fill="#9cdcfe"/><rect x="7.0" y="153.1" width="9.0" height="1" fill="#4ec9b0"/><rect x="17.0" y="153.1" width="1.0" height="1" fill="#9cdcfe"/><rect x="1.0" y="155.2" width="7.0" height="1" fill="#ce9178"/><rect x="9.0" y="155.2" width="9.0" height="1" fill="#d4d4d4"/><rect x="19.0" y="155.2" width="3.0" height="1" fill="#d4d4d4"/><rect x="0.0" y="163.6" width="3.0" height="1" fill="#4ec9b0"/><rect x="4.0" y="163.6" width="1.0" height="1" fill="#d4d4d4"/><rect x="0.0" y="171.9" width="1.0" height="1" fill="#b5cea8"/><rect x="2.0" y="171.9" width="4.0" height="1" fill="#ce9178"/><rect x="7.0" y="171.9" width="1.0" height="1" fill="#d4d4d4"/><rect x="0.0" y="176.1" width="4.0" height="1" fill="#4ec9b0"/><rect x="5.0" y="176.1" width="4.0" height="1" fill="#dcdcaa"/><rect x="0.0" y="178.1" width="5.0" height="1" fill="#c586c0"/><rect x="6.0" y="178.1" width="3.0" height="1" fill="#d4d4d4"/><rect x="1.0" y="180.2" width="4.0" height="1" fill="#b5cea8"/><rect x="6.0" y="180.2" width="3.0" height="1" fill="#b5cea8"/><rect x="10.0" y="180.2" width="2.0" height="1" fill="#9cdcfe"/><rect x="13.0" y="180.2" width="5.0" height="1" fill="#9cdcfe"/><rect x="0.0" y="188.6" width="1.0" height="1" fill="#4ec9b0"/><rect x="2.0" y="188.6" width="7.0" height="1" fill="#d4d4d4"/><rect x="10.0" y="188.6" width="2.0" height="1" fill="#569cd6"/><rect x="0.0" y="194.8" width="5.0" height="1" fill="#c586c0"/><rect x="6.0" y="194.8" width="2.0" height="1" fill="#9cdcfe"/><rect x="0.0" y="196.9" width="1.0" height="1" fill="#d4d4d4"/><rect x="2.0" y="196.9" width="3.0" height="1" fill="#ce9178"/><rect x="0.5" y="203.1" width="6.0" height="1" fill="#9cdcfe"/><rect x="7.5" y="203.1" width="3.0" height="1" fill="#9cdcfe"/><rect x="11.5" y="203.1" width="4.5" height="1" fill="#9cdcfe"/><rect x="17.0" y="203.1" width="6.0" height="1" fill="#ce9178"/><rect x="24.0" y="203.1" width="3.0" height="1" fill="#ce9178"/><rect x="28.0" y="203.1" width="9.0" height="1" fill="#ce9178"/><rect x="38.0" y="203.1" width="3.0" height="1" fill="#ce9178"/><rect x="42.0" y="203.1" width="13.5" height="1" fill="#9cdcfe"/><rect x="56.5" y="203.1" width="10.5" height="1" fill="#9cdcfe"/><rect x="68.0" y="203.1" width="1.0" height="1" fill="#ce9178"/><rect x="0.0" y="205.2" width="6.0" height="1" fill="#d4d4d4"/><rect x="7.0" y="205.2" width="2.0" height="1" fill="#4ec9b0"/><rect x="1.0" y="211.5" width="9.0" height="1" fill="#dcdcaa"/><rect x="11.0" y="211.5" width="5.0" height="1" fill="#d4d4d4"/><rect x="0.0" y="213.6" width="3.0" height="1" fill="#569cd6"/><rect x="4.0" y="213.6" width="4.0" height="1" fill="#4ec9b0"/><rect x="9.0" y="213.6" width="4.0" height="1" fill="#9cdcfe"/><rect x="14.0" y="213.6" width="3.0" height="1" fill="#dcdcaa"/><rect x="0.0" y="217.7" width="3.0" height="1" fill="#9cdcfe"/><rect x="4.0" y="217.7" width="1.0" height="1" fill="#4ec9b0"/><rect x="0.0" y="219.8" width="7.0" height="1" fill="#d4d4d4"/><rect x="8.0" y="219.8" width="8.0" height="1" fill="#dcdcaa"/><rect x="17.0" y="219.8" width="4.0" height="1" fill="#d4d4d4"/><rect x="22.0" y="219.8" width="5.0" height="1" fill="#4ec9b0"/><rect x="0.0" y="226.1" width="2.0" height="1" fill="#9cdcfe"/><rect x="3.0" y="226.1" width="7.0" height="1" fill="#d4d4d4"/><rect x="11.0" y="226.1" width="5.0" height="1" fill="#c586c0"/><rect x="17.0" y="226.1" width="1.0" height="1" fill="#ce9178"/><rect x="0.0" y="230.2" width="7.0" height="1" fill="#d4d4d4"/><rect x="8.0" y="230.2" width="6.0" height="1" fill="#b5cea8"/><rect x="15.0" y="230.2" width="2.0" height="1" fill="#c586c0"/><rect x="18.0" y="230.2" width="2.0" height="1" fill="#c586c0"/><rect x="0.0" y="232.3" width="7.0" height="1" fill="#ce9178"/><rect x="8.0" y="232.3" width="3.0" height="1" fill="#d4d4d4"/><rect x="12.0" y="232.3" width="4.0" height="1" fill="#d4d4d4"/><rect x="0.0" y="238.5" width="7.0" height="1" fill="#4ec9b0"/><rect x="8.0" y="238.5" width="6.0" height="1" fill="#c586c0"/><rect x="15.0" y="238.5" width="2.0" height="1" fill="#4ec9b0"/><rect x="1.0" y="240.6" width="9.0" height="1" fill="#b5cea8"/><rect x="11.0" y="240.6" width="5.0" height="1" fill="#9cdcfe"/><rect x="0.0" y="246.9" width="8.0" height="1" fill="#d4d4d4"/><rect x="9.0" y="246.9" width="6.0" height="1" fill="#569cd6"/><rect x="0.0" y="249.0" width="3.0" height="1" fill="#4ec9b0"/><rect x="4.0" y="249.0" width="3.0" height="1" fill="#dcdcaa"/><rect x="8.0" y="249.0" width="3.0" height="1" fill="#d4d4d4"/><rect x="0.0" y="255.2" width="2.0" height="1" fill="#569cd6"/><rect x="3.0" y="255.2" width="1.0" height="1" fill="#d4d4d4"/><rect x="0.0" y="257.3" width="2.0" height="1" fill="#b5cea8"/><rect x="3.0" y="257.3" width="3.0" height="1" fill="#4ec9b0"/><rect x="7.0" y="257.3" width="4.0" height="1" fill="#9cdcfe"/><rect x="12.0" y="257.3" width="8.0" height="1" fill="#9cdcfe"/><rect x="21.0" y="257.3" width="9.0" height="1" fill="#569cd6"/><rect x="31.0" y="257.3" width="5.0" height="1" fill="#569cd6"/><rect x="0.0" y="261.5" width="4.0" height="1" fill="#9cdcfe"/><rect x="5.0" y="261.5" width="3.0" height="1" fill="#4ec9b0"/><rect x="0.0" y="263.5" width="2.0" height="1" fill="#ce9178"/><rect x="3.0" y="263.5" width="2.0" height="1" fill="#ce9178"/><rect x="6.0" y="263.5" width="9.0" height="1" fill="#9cdcfe"/><rect x="16.0" y="263.5" width="6.0" height="1" fill="#4ec9b0"/><rect x="23.0" y="263.5" width="2.0" height="1" fill="#4ec9b0"/><rect x="26.0" y="263.5" width="4.0" height="1" fill="#4ec9b0"/><rect x="31.0" y="263.5" width="1.0" height="1" fill="#4ec9b0"/><rect x="0.0" y="267.7" width="2.0" height="1" fill="#dcdcaa"/><rect x="3.0" y="267.7" width="4.0" height="1" fill="#9cdcfe"/><rect x="8.0" y="267.7" width="2.0" height="1" fill="#c586c0"/><rect x="1.0" y="269.8" width="3.0" height="1" fill="#dcdcaa"/><rect x="5.0" y="269.8" width="5.0" height="1" fill="#9cdcfe"/><rect x="0.0" y="271.9" width="6.0" height="1" fill="#dcdcaa"/><rect x="7.0" y="271.9" width="3.0" height="1" fill="#b5cea8"/><rect x="11.0" y="271.9" width="2.0" height="1" fill="#569cd6"/><rect x="1.0" y="276.0" width="4.0" height="1" fill="#c586c0"/><rect x="6.0" y="276.0" width="6.0" height="1" fill="#4ec9b0"/><rect x="13.0" y="276.0" width="4.0" height="1" fill="#d4d4d4"/><rect x="18.0" y="276.0" width="5.0" height="1" fill="#b5cea8"/><rect x="24.0" y="276.0" width="1.0" height="1" fill="#569cd6"/><rect x="0.0" y="282.3" width="5.0" height="1" fill="#ce9178"/><rect x="6.0" y="282.3" width="4.0" height="1" fill="#9cdcfe"/><rect x="0.0" y="284.4" width="3.0" height="1" fill="#d4d4d4"/><rect x="0.0" y="296.9" width="2.0" height="1" fill="#d4d4d4"/><rect x="3.0" y="296.9" width="3.0" height="1" fill="#c586c0"/><rect x="0.0" y="299.0" width="3.0" height="1" fill="#9cdcfe"/><rect x="4.0" y="299.0" width="8.0" height="1" fill="#ce9178"/><rect x="0.0" y="303.1" width="3.0" height="1" fill="#b5cea8"/><rect x="4.0" y="303.1" width="3.0" height="1" fill="#b5cea8"/><rect x="0.0" y="307.3" width="2.0" height="1" fill="#9cdcfe"/><rect x="3.0" y="307.3" width="7.0" height="1" fill="#c586c0"/><rect x="11.0" y="307.3" width="6.0" height="1" fill="#9cdcfe"/><rect x="0.0" y="309.4" width="2.0" height="1" fill="#ce9178"/><rect x="3.0" y="309.4" width="3.0" height="1" fill="#569cd6"/><rect x="7.0" y="309.4" width="8.0" height="1" fill="#dcdcaa"/><rect x="16.0" y="309.4" width="5.0" height="1" fill="#4ec9b0"/><rect x="22.0" y="309.4" width="2.0" height="1" fill="#ce9178"/><rect x="25.0" y="309.4" width="7.0" height="1" fill="#dcdcaa"/><rect x="33.0" y="309.4" width="2.0" height="1" fill="#9cdcfe"/><rect x="1.0" y="311.5" width="1.0" height="1" fill="#9cdcfe"/><rect x="0.0" y="313.5" width="4.0" height="1" fill="#9cdcfe"/><rect x="0.0" y="330.2" width="2.0" height="1" fill="#d4d4d4"/><rect x="3.0" y="330.2" width="7.0" height="1" fill="#9cdcfe"/><rect x="11.0" y="330.2" width="7.0" height="1" fill="#9cdcfe"/><rect x="0.0" y="332.3" width="3.0" height="1" fill="#d4d4d4"/><rect x="4.0" y="332.3" width="6.0" height="1" fill="#d4d4d4"/><rect x="11.0" y="332.3" width="2.0" height="1" fill="#d4d4d4"/><rect x="14.0" y="332.3" width="5.0" height="1" fill="#4ec9b0"/><rect x="0.0" y="336.5" width="1.0" height="1" fill="#d4d4d4"/><rect x="2.0" y="336.5" width="3.0" height="1" fill="#9cdcfe"/><rect x="6.0" y="336.5" width="2.0" height="1" fill="#dcdcaa"/><rect x="9.0" y="336.5" width="2.0" height="1" fill="#b5cea8"/><rect x="0.0" y="338.5" width="4.0" height="1" fill="#4ec9b0"/><rect x="5.0" y="338.5" width="8.0" height="1" fill="#4ec9b0"/><rect x="0.0" y="340.6" width="4.0" height="1" fill="#9cdcfe"/><rect x="5.0" y="340.6" width="4.0" height="1" fill="#ce9178"/><rect x="10.0" y="340.6" width="2.0" height="1" fill="#569cd6"/><rect x="0.0" y="344.8" width="7.0" height="1" fill="#9cdcfe"/><rect x="8.0" y="344.8" width="4.0" height="1" fill="#c586c0"/><rect x="13.0" y="344.8" width="2.0" height="1" fill="#ce9178"/><rect x="16.0" y="344.8" width="3.0" height="1" fill="#d4d4d4"/><rect x="20.0" y="344.8" width="3.0" height="1" fill="#dcdcaa"/><rect x="24.0" y="344.8" width="7.0" height="1" fill="#d4d4d4"/><rect x="32.0" y="344.8" width="2.0" height="1" fill="#9cdcfe"/><rect x="0.0" y="346.9" width="1.0" height="1" fill="#c586c0"/><rect x="2.0" y="346.9" width="9.0" height="1" fill="#dcdcaa"/><rect x="12.0" y="346.9" width="3.0" height="1" fill="#dcdcaa"/><rect x="16.0" y="346.9" width="1.0" height="1" fill="#d4d4d4"/><rect x="0.0" y="367.7" width="2.0" height="1" fill="#9cdcfe"/><rect x="3.0" y="367.7" width="9.0" height="1" fill="#4ec9b0"/><rect x="0.0" y="369.8" width="1.0" height="1" fill="#569cd6"/><rect x="2.0" y="369.8" width="9.0" height="1" fill="#569cd6"/><rect x="12.0" y="369.8" width="4.0" height="1" fill="#c586c0"/><rect x="0.0" y="371.9" width="4.0" height="1" fill="#9cdcfe"/><rect x="5.0" y="371.9" width="1.0" height="1" fill="#9cdcfe"/><rect x="0.0" y="373.9" width="2.0" height="1" fill="#9cdcfe"/><rect x="0.0" y="378.1" width="3.0" height="1" fill="#c586c0"/><rect x="4.0" y="378.1" width="3.0" height="1" fill="#ce9178"/><rect x="8.0" y="378.1" width="2.0" height="1" fill="#9cdcfe"/><rect x="11.0" y="378.1" width="2.0" height="1" fill="#d4d4d4"/><rect x="14.0" y="378.1" width="2.0" height="1" fill="#4ec9b0"/><rect x="17.0" y="378.1" width="4.0" height="1" fill="#4ec9b0"/><rect x="22.0" y="378.1" width="4.0" height="1" fill="#dcdcaa"/><rect x="27.0" y="378.1" width="6.0" height="1" fill="#dcdcaa"/><rect x="34.0" y="378.1" width="4.0" height="1" fill="#9cdcfe"/><rect x="0.0" y="380.2" width="7.0" height="1" fill="#9cdcfe"/><rect x="8.0" y="380.2" width="2.0" height="1" fill="#ce9178"/><rect x="11.0" y="380.2" width="2.0" height="1" fill="#9cdcfe"/><rect x="14.0" y="380.2" width="5.0" height="1" fill="#b5cea8"/><rect x="0.0" y="382.3" width="1.0" height="1" fill="#ce9178"/><rect x="2.0" y="382.3" width="2.0" height="1" fill="#4ec9b0"/><rect x="0.0" y="392.7" width="5.0" height="1" fill="#d4d4d4"/><rect x="6.0" y="392.7" width="8.0" height="1" fill="#d4d4d4"/><rect x="15.0" y="392.7" width="1.0" height="1" fill="#c586c0"/><rect x="0.0" y="396.9" width="3.0" height="1" fill="#ce9178"/><rect x="4.0" y="396.9" width="5.0" height="1" fill="#569cd6"/><rect x="0.0" y="398.9" width="4.0" height="1" fill="#d4d4d4"/><rect x="5.0" y="398.9" width="2.0" height="1" fill="#569cd6"/><rect x="8.0" y="398.9" width="7.0" height="1" fill="#4ec9b0"/><rect x="0.0" y="403.1" width="12.5" height="1" fill="#ce9178"/><rect x="13.5" y="403.1" width="4.5" height="1" fill="#9cdcfe"/><rect x="19.0" y="403.1" width="3.0" height="1" fill="#ce9178"/><rect x="23.0" y="403.1" width="9.0" height="1" fill="#ce9178"/><rect x="33.0" y="403.1" width="7.5" height="1" fill="#ce9178"/><rect x="41.5" y="403.1" width="4.5" height="1" fill="#ce9178"/><rect x="47.0" y="403.1" width="9.0" height="1" fill="#9cdcfe"/><rect x="57.0" y="403.1" width="7.5" height="1" fill="#ce9178"/><rect x="65.5" y="403.1" width="1.5" height="1" fill="#9cdcfe"/><rect x="0.0" y="405.2" width="7.0" height="1" fill="#d4d4d4"/><rect x="8.0" y="405.2" width="7.0" height="1" fill="#dcdcaa"/><rect x="16.0" y="405.2" width="3.0" height="1" fill="#ce9178"/><rect x="0.0" y="407.3" width="3.0" height="1" fill="#4ec9b0"/><rect x="0.0" y="413.5" width="8.0" height="1" fill="#ce9178"/><rect x="0.0" y="423.9" width="2.0" height="1" fill="#569cd6"/><rect x="3.0" y="423.9" width="1.0" height="1" fill="#ce9178"/><rect x="0.0" y="426.0" width="1.0" height="1" fill="#569cd6"/><rect x="2.0" y="426.0" width="1.0" height="1" fill="#9cdcfe"/><rect x="0.0" y="432.3" width="6.0" height="1" fill="#4ec9b0"/><rect x="7.0" y="432.3" width="4.0" height="1" fill="#b5cea8"/><rect x="0.0" y="434.4" width="2.0" height="1" fill="#b5cea8"/><rect x="3.0" y="434.4" width="5.0" height="1" fill="#9cdcfe"/><rect x="9.0" y="434.4" width="9.0" height="1" fill="#c586c0"/><rect x="19.0" y="434.4" width="5.0" height="1" fill="#d4d4d4"/><rect x="0.0" y="436.4" width="2.0" height="1" fill="#dcdcaa"/><rect x="3.0" y="436.4" width="2.0" height="1" fill="#4ec9b0"/><rect x="6.0" y="436.4" width="3.0" height="1" fill="#4ec9b0"/><rect x="10.0" y="436.4" width="2.0" height="1" fill="#4ec9b0"/><rect x="0.0" y="438.5" width="2.0" height="1" fill="#9cdcfe"/><rect x="3.0" y="438.5" width="4.0" height="1" fill="#4ec9b0"/><rect x="0.0" y="440.6" width="1.0" height="1" fill="#4ec9b0"/><rect x="2.0" y="440.6" width="5.0" height="1" fill="#ce9178"/><rect x="0.0" y="444.8" width="7.0" height="1" fill="#c586c0"/><rect x="8.0" y="444.8" width="2.0" height="1" fill="#d4d4d4"/><rect x="11.0" y="444.8" width="6.0" height="1" fill="#d4d4d4"/><rect x="18.0" y="444.8" width="3.0" height="1" fill="#9cdcfe"/><rect x="22.0" y="444.8" width="1.0" height="1" fill="#c586c0"/><rect x="0.0" y="446.8" width="2.0" height="1" fill="#9cdcfe"/><rect x="3.0" y="446.8" width="3.0" height="1" fill="#c586c0"/><rect x="7.0" y="446.8" width="7.0" height="1" fill="#4ec9b0"/><rect x="15.0" y="446.8" width="4.0" height="1" fill="#4ec9b0"/><rect x="20.0" y="446.8" width="3.0" height="1" fill="#ce9178"/><rect x="24.0" y="446.8" width="1.0" height="1" fill="#d4d4d4"/><rect x="0.0" y="453.1" width="2.5" height="1" fill="#ce9178"/><rect x="3.5" y="453.1" width="13.5" height="1" fill="#ce9178"/><rect x="18.0" y="453.1" width="7.5" height="1" fill="#9cdcfe"/><rect x="26.5" y="453.1" width="9.0" height="1" fill="#ce9178"/><rect x="36.5" y="453.1" width="6.0" height="1" fill="#9cdcfe"/><rect x="43.5" y="453.1" width="6.0" height="1" fill="#ce9178"/><rect x="50.5" y="453.1" width="10.5" height="1" fill="#9cdcfe"/><rect x="62.0" y="453.1" width="9.0" height="1" fill="#9cdcfe"/><rect x="0.0" y="455.2" width="1.0" height="1" fill="#9cdcfe"/><rect x="2.0" y="455.2" width="6.0" height="1" fill="#b5cea8"/><rect x="0.0" y="457.3" width="1.0" height="1" fill="#9cdcfe"/><rect x="2.0" y="457.3" width="3.0" height="1" fill="#4ec9b0"/><rect x="6.0" y="457.3" width="2.0" height="1" fill="#b5cea8"/><rect x="0.0" y="463.5" width="2.0" height="1" fill="#dcdcaa"/><rect x="3.0" y="463.5" width="4.0" height="1" fill="#9cdcfe"/><rect x="8.0" y="463.5" width="7.0" height="1" fill="#9cdcfe"/><rect x="0.0" y="465.6" width="5.0" height="1" fill="#4ec9b0"/><rect x="6.0" y="465.6" width="8.0" height="1" fill="#9cdcfe"/><rect x="15.0" y="465.6" width="3.0" height="1" fill="#d4d4d4"/><rect x="0.0" y="467.7" width="5.0" height="1" fill="#9cdcfe"/><rect x="6.0" y="467.7" width="2.0" height="1" fill="#9cdcfe"/><rect x="0.0" y="469.8" width="4.0" height="1" fill="#dcdcaa"/><rect x="5.0" y="469.8" width="2.0" height="1" fill="#b5cea8"/><rect x="0.0" y="476.0" width="8.0" height="1" fill="#dcdcaa"/><rect x="9.0" y="476.0" width="2.0" height="1" fill="#9cdcfe"/><rect x="12.0" y="476.0" width="7.0" height="1" fill="#d4d4d4"/><rect x="0.0" y="486.4" width="4.0" height="1" fill="#ce9178"/><rect x="5.0" y="486.4" width="7.5" height="1" fill="#ce9178"/><rect x="13.5" y="486.4" width="13.5" height="1" fill="#ce9178"/><rect x="28.0" y="486.4" width="3.0" height="1" fill="#ce9178"/><rect x="32.0" y="486.4" width="12.0" height="1" fill="#9cdcfe"/><rect x="45.0" y="486.4" width="9.0" height="1" fill="#ce9178"/><rect x="55.0" y="486.4" width="9.0" height="1" fill="#ce9178"/><rect x="65.0" y="486.4" width="6.0" height="1" fill="#ce9178"/><rect x="1.0" y="490.6" width="4.5" height="1" fill="#ce9178"/><rect x="6.5" y="490.6" width="6.0" height="1" fill="#ce9178"/><rect x="13.5" y="490.6" width="12.0" height="1" fill="#ce9178"/><rect x="26.5" y="490.6" width="7.5" height="1" fill="#ce9178"/><rect x="35.0" y="490.6" width="13.5" height="1" fill="#ce9178"/><rect x="49.5" y="490.6" width="12.0" height="1" fill="#9cdcfe"/><rect x="62.5" y="490.6" width="6.0" height="1" fill="#ce9178"/><rect x="69.5" y="490.6" width="1.5" height="1" fill="#ce9178"/><rect x="1.0" y="494.8" width="9.0" height="1" fill="#dcdcaa"/><rect x="11.0" y="494.8" width="1.0" height="1" fill="#569cd6"/><rect x="0.0" y="501.0" width="2.0" height="1" fill="#ce9178"/><rect x="3.0" y="501.0" width="2.0" height="1" fill="#4ec9b0"/><rect x="6.0" y="501.0" width="3.0" height="1" fill="#dcdcaa"/><rect x="0.0" y="503.1" width="2.0" height="1" fill="#9cdcfe"/><rect x="3.0" y="503.1" width="5.0" height="1" fill="#dcdcaa"/><rect x="0.0" y="505.2" width="6.0" height="1" fill="#ce9178"/><rect x="7.0" y="505.2" width="6.0" height="1" fill="#9cdcfe"/><rect x="14.0" y="505.2" width="4.0" height="1" fill="#4ec9b0"/><rect x="19.0" y="505.2" width="3.0" height="1" fill="#dcdcaa"/><rect x="23.0" y="505.2" width="7.0" height="1" fill="#d4d4d4"/><rect x="0.0" y="509.3" width="4.0" height="1" fill="#9cdcfe"/><rect x="5.0" y="509.3" width="7.0" height="1" fill="#dcdcaa"/><rect x="13.0" y="509.3" width="9.0" height="1" fill="#4ec9b0"/><rect x="23.0" y="509.3" width="7.0" height="1" fill="#ce9178"/><rect x="0.0" y="513.5" width="5.0" height="1" fill="#dcdcaa"/><rect x="6.0" y="513.5" width="4.0" height="1" fill="#9cdcfe"/><rect x="11.0" y="513.5" width="7.0" height="1" fill="#d4d4d4"/><rect x="19.0" y="513.5" width="4.0" height="1" fill="#ce9178"/><rect x="0.0" y="515.6" width="8.0" height="1" fill="#ce9178"/><rect x="9.0" y="515.6" width="4.5" height="1" fill="#ce9178"/><rect x="14.5" y="515.6" width="9.0" height="1" fill="#ce9178"/><rect x="24.5" y="515.6" width="3.0" height="1" fill="#9cdcfe"/><rect x="28.5" y="515.6" width="7.5" height="1" fill="#9cdcfe"/><rect x="37.0" y="515.6" width="3.0" height="1" fill="#9cdcfe"/><rect x="41.0" y="515.6" width="4.5" height="1" fill="#ce9178"/><rect x="46.5" y="515.6" width="9.0" height="1" fill="#ce9178"/><rect x="56.5" y="515.6" width="9.0" height="1" fill="#9cdcfe"/><rect x="66.5" y="515.6" width="4.5" height="1" fill="#9cdcfe"/><rect x="0.0" y="521.8" width="6.0" height="1" fill="#9cdcfe"/><rect x="7.0" y="521.8" width="2.0" height="1" fill="#4ec9b0"/><rect x="10.0" y="521.8" width="8.0" height="1" fill="#dcdcaa"/><rect x="19.0" y="521.8" width="8.0" height="1" fill="#569cd6"/><rect x="0.0" y="528.1" width="6.0" height="1" fill="#d4d4d4"/><rect x="7.0" y="528.1" width="2.0" height="1" fill="#569cd6"/><rect x="10.0" y="528.1" width="3.0" height="1" fill="#4ec9b0"/><rect x="14.0" y="528.1" width="4.0" height="1" fill="#dcdcaa"/><rect x="0.0" y="530.2" width="4.0" height="1" fill="#9cdcfe"/><rect x="5.0" y="530.2" width="8.0" height="1" fill="#4ec9b0"/><rect x="14.0" y="530.2" width="9.0" height="1" fill="#4ec9b0"/><rect x="24.0" y="530.2" width="2.0" height="1" fill="#4ec9b0"/><rect x="27.0" y="530.2" width="8.0" height="1" fill="#c586c0"/><rect x="36.0" y="530.2" width="2.0" height="1" fill="#ce9178"/><rect x="0.0" y="538.5" width="4.0" height="1" fill="#d4d4d4"/><rect x="5.0" y="538.5" width="5.0" height="1" fill="#c586c0"/><rect x="11.0" y="538.5" width="2.0" height="1" fill="#9cdcfe"/><rect x="1.0" y="544.8" width="3.0" height="1" fill="#d4d4d4"/><rect x="5.0" y="544.8" width="2.0" height="1" fill="#b5cea8"/><rect x="8.0" y="544.8" width="5.0" height="1" fill="#b5cea8"/><rect x="14.0" y="544.8" width="2.0" height="1" fill="#d4d4d4"/><rect x="0.0" y="548.9" width="2.0" height="1" fill="#ce9178"/><rect x="0.0" y="551.0" width="1.0" height="1" fill="#9cdcfe"/><rect x="2.0" y="551.0" width="6.0" height="1" fill="#d4d4d4"/><rect x="9.0" y="551.0" width="2.0" height="1" fill="#d4d4d4"/><rect x="0.0" y="553.1" width="4.0" height="1" fill="#ce9178"/><rect x="5.0" y="553.1" width="7.0" height="1" fill="#b5cea8"/><rect x="0.0" y="557.2" width="5.0" height="1" fill="#9cdcfe"/><rect x="6.0" y="557.2" width="2.0" height="1" fill="#9cdcfe"/><rect x="9.0" y="557.2" width="3.0" height="1" fill="#9cdcfe"/><rect x="13.0" y="557.2" width="7.0" height="1" fill="#569cd6"/><rect x="21.0" y="557.2" width="3.0" height="1" fill="#ce9178"/><rect x="25.0" y="557.2" width="9.0" height="1" fill="#4ec9b0"/><rect x="35.0" y="557.2" width="1.0" height="1" fill="#dcdcaa"/><rect x="0.0" y="559.3" width="3.0" height="1" fill="#569cd6"/><rect x="4.0" y="559.3" width="3.0" height="1" fill="#4ec9b0"/><rect x="8.0" y="559.3" width="4.0" height="1" fill="#d4d4d4"/></svg>
<div class="abs" style="left:1123px;top:23px;width:1px;height:604px;background:#191919"></div>
<div class="abs" style="left:1152px;top:278.5px;width:72px;height:2px;background:#1f4f85"></div><div class="abs" style="left:1152px;top:278.5px;width:31px;height:2px;background:#3a8fe8"></div>
<div class="abs" style="left:1152px;top:369.5px;width:72px;height:2px;background:#8a5a1c"></div>
<div class="abs" style="left:1152px;top:447.5px;width:72px;height:2px;background:#2b6bb3"></div>
<div class="abs" style="left:1224px;top:23px;width:1px;height:604px;background:#2b2b2b"></div>
<div class="abs" style="left:1224px;top:536px;width:14px;height:50px;background:#424242"></div>
<div class="abs" style="left:1224px;top:556px;width:14px;height:1.5px;background:#7a7a7a"></div>
<div class="abs" style="left:1233px;top:282.5px;width:5px;height:5px;background:#2f7fe0"></div>
<div class="abs" style="left:1229px;top:375.5px;width:6px;height:6px;background:#8a5a1c"></div>
<div class="abs" style="left:1233px;top:455.5px;width:5px;height:5px;background:#2f7fe0"></div>
</div>
<div id="panel">
  <div class="con" style="top:32.500px">I/ImeTracker( 3317): com.example.absensi_karyawan:4a52e476: onCancelled at PHASE_CLIENT_ALREADY_HIDDEN
D/VRI[MainActivity]( 3317): visibilityChanged oldVisibility=true newVisibility=false
W/WindowOnBackDispatcher( 3317): sendCancelIfRunning: isInProgress=false callback=android.app.Activity$$ExternalSyntheticLambda0@4b3599d
D/ViewRootImpl( 3317): Skipping stats log for color mode
I/EGL_emulation( 3317): Opening libGLESv1_CM_emulation.so
I/EGL_emulation( 3317): Opening libGLESv2_emulation.so
W/HWUI    ( 3317): Failed to choose config with EGL_SWAP_BEHAVIOR_PRESERVED, retrying without...
W/HWUI    ( 3317): Failed to initialize 101010-2 format, error = EGL_SUCCESS
I/bsensi_karyawan( 3317): AssetManager2(0x716fd48cabf8) locale list changing from [] to [en-US]
I/flutter ( 3317): [IMPORTANT:flutter/shell/platform/android/android_context_gl_impeller.cc(104)] Using the Impeller rendering backend (OpenGLES).
D/AutofillManager( 3317): Fill dialog is enabled:false, hints=[]</div>
  <div class="abs" style="left:0;top:0;width:1238px;height:35px;background:#181818;box-shadow:0 2px 3px rgba(0,0,0,.55)"></div>
  <span class="ptab" style="left:21.400px;letter-spacing:-.55px">PROBLEMS</span>
  <div class="abs" style="left:81.200px;top:9px;width:17px;height:17px;border-radius:50%;background:#0078d4"></div>
  <span class="t" style="left:86.600px;top:12px;font-size:11px;color:#fff;line-height:12px">3</span>
  <span class="ptab" style="left:120.800px;letter-spacing:-.27px">OUTPUT</span>
  <span class="ptab" style="left:189.200px;color:#e7e7e7;letter-spacing:-.44px">DEBUG CONSOLE</span>
  <div class="abs" style="left:187px;top:29px;width:94px;height:1px;background:#0078d4"></div>
  <span class="ptab" style="left:303.300px;letter-spacing:-.26px">TERMINAL</span>
  <span class="ptab" style="left:381.400px;letter-spacing:-.78px">PORTS</span>
  <div class="abs" style="left:686.700px;top:6.300px;width:417.300px;height:24.300px;background:#313131;border:1px solid #3a3a3a;border-radius:2px"></div>
  <span class="t" style="left:694px;top:10.500px;font-size:13.300px;color:#8b8b8b;line-height:15px">Filter (e.g. text, !exclude, \escape)</span>
  <svg class="abs" style="left:1108px;top:6px" width="130" height="24" viewBox="1470 706 130 24" fill="none" stroke="#c5c5c5" stroke-width="1.200">
    <circle cx="1483.800" cy="715" r="4.400"/><path d="M1480.600 718.300L1474.500 724.600" stroke-width="1.400"/>
    <path d="M1501 713h15M1501 716.200h15M1501 719.500h15M1501 722.700h9M1512 721l3.600 3.600M1515.600 721l-3.600 3.600"/>
    <path d="M1528.700 709V726" stroke="#5a5a5a" stroke-width="1"/>
    <path d="M1542.500 715.500V712.500H1545.500M1551.500 712.500H1554.500V715.500M1554.500 719.500V722.500H1551.500M1545.500 722.500H1542.500V719.500" stroke-width="1.500"/>
    <path d="M1571.500 712.700L1581 722.300M1581 712.700L1571.500 722.300" stroke-width="1.300"/>
  </svg>
  <!-- repl input -->
  <div class="abs" style="left:0;top:255px;width:1238px;height:23px;background:#181818;border-top:1px solid #2f2f2f"></div>
  <svg class="abs" style="left:13.500px;top:260.500px" width="8" height="12" viewBox="0 0 8 12" fill="none" stroke="#c5c5c5" stroke-width="1.400"><path d="M1.500 1l5 5-5 5"/></svg>
</div>

<div id="status">
  <svg class="abs" style="left:0;top:0" width="170" height="21" viewBox="0 977 170 21" fill="none" stroke="#fff" stroke-width="1.100" stroke-linecap="round" stroke-linejoin="round">
    <path d="M13.500 983.500L17.500 987.500L13.500 991.500M22.500 981.500L19 985L22.500 988.500" stroke-width="1.200"/>
    <circle cx="51.300" cy="987.500" r="5.900"/><path d="M48.800 985L53.800 990M53.800 985L48.800 990"/>
    <path d="M79.500 981.500L85.700 993H73.300zM79.500 985.500V989.500M79.500 991V991.300"/>
    <circle cx="107.500" cy="987.500" r="5.900"/><path d="M107.500 986.800V990.800M107.500 984.300V984.600"/>
    <path d="M146 985.500V982.300L155 987.800L150.800 990.300"/><g stroke-width=".9"><rect x="142.800" y="988" width="5" height="4.600" rx="1.500"/><path d="M142.800 990.300H141.500M147.800 990.300H149.200M143.300 988.500L142.300 987.500M147.300 988.500L148.300 987.500M143.500 992.300L142.500 993.200M147.200 992.300L148.200 993.200"/></g>
  </svg>
  <span class="s" style="left:62px">1</span>
  <span class="s" style="left:90px">0</span>
  <span class="s" style="left:118px">2</span>
  <span class="s" style="left:173px;letter-spacing:.05px">Debug my code</span>
  <span class="s" style="left:949px;letter-spacing:-.18px">Ln 312, Col 24</span>
  <span class="s" style="left:1043.200px;letter-spacing:-.45px">Spaces: 2</span>
  <span class="s" style="left:1111.200px;letter-spacing:-.46px">UTF-8</span>
  <span class="s" style="left:1160.500px;letter-spacing:-1.3px">CRLF</span>
  <span class="s" style="left:1205.500px;letter-spacing:1.500px">{}</span>
  <span class="s" style="left:1226px">Dart</span>
  <svg class="abs" style="left:1264px;top:2px" width="50" height="17" viewBox="1264 979 50 17" fill="none" stroke="#fff" stroke-width="1.200" stroke-linejoin="round" stroke-linecap="round">
    <path d="M1266.800 986.500V990.500q0 2 6 2q6 0 6-2V986.500"/><rect x="1266.700" y="981.500" width="5.300" height="5.400" rx="2"/><rect x="1273.600" y="981.500" width="5.300" height="5.400" rx="2"/><path d="M1270.800 989V990.500M1274.800 989V990.500"/>
    <circle cx="1303.800" cy="986.500" r="1.600"/><path d="M1300.300 990.500A5 5 0 1 1 1307.300 990.500M1303.800 989V994.500" />
  </svg>
  <span class="s" style="left:1315.200px;letter-spacing:-.27px">Go Live</span>
  <span class="s" style="left:1372.600px;letter-spacing:.07px">Iphone X (android-x64 emulator)</span>
  <svg class="abs" style="left:1570px;top:2.500px" width="16" height="16" viewBox="0 0 16 16" fill="none" stroke="#fff" stroke-width="1.200" stroke-linejoin="round"><path d="M9 2.300A4.300 4.300 0 0 0 3.700 6.500V10L2.500 12H13.500L12.300 10V8.500M6.500 12a1.500 1.500 0 0 0 3 0"/><circle cx="11.800" cy="4.300" r="2.300" fill="#fff" stroke="none"/></svg>
</div>

<div id="phone"></div>
<div id="screen" style="left:1126px;top:111px;width:300px;height:648px">
  <!-- red header -->
  <div class="abs" style="left:0;top:0;width:300px;height:254.500px;border-radius:0 0 17px 17px;background:linear-gradient(128deg,#f2463c 0%,#ee524b 45%,#e96c6c 100%)"></div>
  <div class="abs" style="left:0;top:0;width:300px;height:51.500px;background:linear-gradient(100deg,rgba(200,70,75,.14),rgba(200,80,95,.34) 70%,rgba(205,85,100,.30))"></div>
  <!-- status bar -->
  <span class="t" style="left:10.500px;top:3px;font-size:9.300px;color:rgba(95,10,12,.85);line-height:10px;letter-spacing:-.2px">11:38</span>
  <svg class="abs" style="left:0;top:0" width="300" height="26" viewBox="1126 111 300 26" fill="rgba(85,14,16,.78)" stroke="none">
    <path d="M1166.500 114.300l3.700 1.500v2.700c0 2.300-1.500 4-3.700 4.800c-2.200-.8-3.700-2.500-3.700-4.800v-2.700z" fill="none" stroke="rgba(85,14,16,.78)" stroke-width="1"/><path d="M1163.700 115.700l5.800 6" stroke="rgba(85,14,16,.78)" stroke-width="1" fill="none"/>
    <path d="M1179.300 114.500h3.700a.8.800 0 0 1 .8.800v6.200a.8.800 0 0 1-.8.800h-5.200a.8.800 0 0 1-.8-.8v-4.700z"/>
    <path d="M1382.500 122.800l-5-6.200a7.500 7.500 0 0 1 10 0z"/>
    <path d="M1389.500 122.500h8v-8z"/>
    <path d="M1402.800 114.300h3v.9h.9a.6.600 0 0 1 .6.600v6.300a.6.600 0 0 1-.6.600h-4.800a.6.600 0 0 1-.6-.6v-6.300a.6.600 0 0 1 .6-.6h.9z"/>
    <!-- notch -->
    <path d="M1185 110.500H1367V111c-4 0-6.400 1.800-6.400 5.500v1.200c0 11-6 17-17 17h-135.600c-11 0-17-6-17-17v-1.200c0-3.700-2.400-5.500-6-5.500z" fill="#212121"/>
  </svg>
  <!-- app bar -->
  <div class="abs" style="left:12px;top:29.800px;width:12px;height:1.400px;background:rgba(110,20,24,.8)"></div>
  <div class="abs" style="left:12px;top:33.400px;width:12px;height:1.400px;background:rgba(110,20,24,.8)"></div>
  <div class="abs" style="left:12px;top:37px;width:12px;height:1.400px;background:rgba(110,20,24,.8)"></div>
  <span class="t" style="left:47.300px;top:25.500px;font-size:14.200px;font-weight:bold;color:#fff;line-height:16px;letter-spacing:-.5px">Dashboard</span>
  <div class="abs" style="left:265.500px;top:20.700px;width:26.200px;height:26.200px;border-radius:50%;background:#fff;overflow:hidden"><div class="abs" style="left:0;top:9.700px;width:27px;height:6.600px;background:#f4001f"></div><div class="abs" style="left:2.500px;top:11.500px;width:3px;height:3px;border-radius:50%;background:#fff"></div><div class="abs" style="left:7px;top:12.300px;width:16px;height:1.400px;background:rgba(255,255,255,.6)"></div></div>
  <!-- profile photo -->
  <svg class="abs" style="left:119.500px;top:56px" width="60" height="60" viewBox="-30 -30 60 60"><defs><clipPath id="pc"><circle cx="0" cy="0" r="29.500"/></clipPath><filter id="pb" x="-10%" y="-10%" width="120%" height="120%"><feGaussianBlur stdDeviation=".55"/></filter></defs><g clip-path="url(#pc)"><rect x="-30" y="-30" width="60" height="60" fill="#ba2b2f"/><g filter="url(#pb)">
    <path d="M-26 31l2-14.300L-11 9.800l4 3.200h11.500l4-3.200L23.600 16.400L26 31z" fill="#1d212e"/>
    <path d="M-7.500 6h13v8.500l-6.200 6L-7.500 14z" fill="#8f7670"/>
    <path d="M-4.800 20.300h8.400l-3.800 8.600z" fill="#d8d4cc"/>
    <path d="M-11 10l6.200 10.300l-1.500 4L-13 14zM8.500 10L3.600 20.300l1.500 4L11 14z" fill="#171a25"/>
    <ellipse cx="-15.600" cy="-5.500" rx="1.800" ry="3.200" fill="#9c8079"/><ellipse cx="13.800" cy="-5.500" rx="1.800" ry="3.200" fill="#9c8079"/>
    <path d="M-15.300-12c0-10 6-14 14.500-14s14.200 4 14.200 14v7c0 8-3 13-7 16.200c-2.500 2-4.500 2.600-7 2.600s-4.500-.6-7-2.600c-4-3.200-7.700-8.200-7.700-16.200z" fill="#a68e88"/>
    <path d="M-11-15h20v6h-20z" fill="#b49d96" opacity=".8"/>
    <path d="M-5 9.500q4.500 3 9 0q-1.500 3.800-4.500 3.800t-4.500-3.800z" fill="#4a3a38" opacity=".55"/>
    <path d="M-7 3.200q6.200-2.200 12.200 0l-.4 1.300q-5.600-1.300-11.400 0z" fill="#3f302e" opacity=".75"/>
    <path d="M-4.500 4.300q3.700 1.300 7.400 0q-1 1.700-3.700 1.700t-3.700-1.700z" fill="#9a5e62"/>
    <path d="M-2.500-1.500q1.800 1.200 3.800 0" stroke="#7d645f" stroke-width="1" fill="none"/>
    <ellipse cx="-8.200" cy="-8.600" rx="2.700" ry="1.200" fill="#3b3f3a"/><ellipse cx="5.800" cy="-8.600" rx="2.700" ry="1.200" fill="#3b3f3a"/>
    <path d="M-11.500-11.300q3.300-1.600 6.300-.5M2.700-11.800q3.300-1.100 6.300.5" stroke="#2a2422" stroke-width="1.100" fill="none"/>
    <path d="M-15.500-10.800c-3-3-3.500-9-1.500-12.200c3-5 9-6.600 16.500-6.400c8 .2 14.500 3 16.300 9.500c1 3.500 0 7.500-2.400 9.400c-.3-2.500-1.200-3.700-2.400-4.200c-3-.3-6.500-2-9.500-3.600c-3.500-1.700-7-2-9.500-.8c-2.200 1-4 4.500-5 7.500c-.8-.3-1.700.2-2.500.8z" fill="#131317"/>
  </g></g></svg>
  <span class="t" style="left:0;width:299px;text-align:center;top:125px;font-size:13px;font-weight:bold;color:#fff;line-height:15px;letter-spacing:-.25px">Rizky Reynaldi</span>
  <span class="t" style="left:0;width:299px;text-align:center;top:147px;font-size:9.400px;color:rgba(255,255,255,.72);line-height:10px;letter-spacing:.1px">Staff IT</span>
  <!-- stats card -->
  <div class="abs" style="left:10px;top:190.800px;width:279px;height:143.600px;border-radius:11.500px;background:#fff;box-shadow:0 4px 7px rgba(0,0,0,.28),0 0 2px rgba(0,0,0,.15)"></div>
  <svg class="abs" style="left:0;top:190px" width="300" height="100" viewBox="1126 301 300 100" fill="#111">
    <path d="M1211.400 317.400h3.500a1.700 1.600 0 0 1 3.400 0h3.500a1.300 1.300 0 0 1 1.300 1.300v10a1.300 1.300 0 0 1-1.300 1.300h-10.400a1.300 1.300 0 0 1-1.300-1.300v-10a1.300 1.300 0 0 1 1.300-1.300z"/>
    <g stroke="#fff" stroke-width="1.200"><path d="M1213 321.200h7.200M1213 323.800h7.200M1213 326.400h5"/></g><circle cx="1216.600" cy="317.700" r=".7" fill="#fff"/>
    <rect x="1342.600" y="322.500" width="2.600" height="6.500"/><rect x="1346.900" y="316.500" width="2.700" height="12.500"/><rect x="1351.300" y="325" width="2.600" height="4"/>
    <circle cx="1275.500" cy="388.700" r="6.600" fill="none" stroke="#111" stroke-width="1.400"/><path d="M1275.500 384.500v4.500l3.200 1.900" fill="none" stroke="#111" stroke-width="1.300"/>
  </svg>
  <span class="t" style="left:40.600px;width:100px;text-align:center;top:226.800px;font-size:8.300px;color:#555;line-height:9px">Total Pengajuan</span>
  <span class="t" style="left:40.600px;width:100px;text-align:center;top:241px;font-size:11px;font-weight:bold;color:#111;line-height:13px;letter-spacing:.55px">124</span>
  <span class="t" style="left:172.200px;width:100px;text-align:center;top:226.800px;font-size:8.050px;color:#555;line-height:9px">Skor KPI</span>
  <span class="t" style="left:172.200px;width:100px;text-align:center;top:241px;font-size:11px;font-weight:bold;color:#3d2ee6;line-height:13px">87%</span>
  <span class="t" style="left:99.500px;width:100px;text-align:center;top:291.800px;font-size:8.100px;color:#666;line-height:9px">Lama Bekerja</span>
  <span class="t" style="left:99.500px;width:100px;text-align:center;top:305.500px;font-size:11px;font-weight:bold;color:#111;line-height:13px">3 Tahun</span>
  <!-- list -->
  <span class="t" style="left:10px;top:355.500px;font-size:11.300px;font-weight:bold;color:#d32f2f;line-height:13px;letter-spacing:.08px">List Status Pengajuan Anda</span>
  <div class="abs" style="left:10px;top:379px;width:279px;height:36px;border-radius:9px;background:#f5f5f5"></div>
  <svg class="abs" style="left:19px;top:390.500px" width="13" height="13" viewBox="0 0 13 13" fill="none" stroke="#555" stroke-width="1.500"><circle cx="5.200" cy="5.200" r="3.600"/><path d="M8 8l3.800 3.800"/></svg>
  <span class="t" style="left:44.400px;top:390.500px;font-size:11px;color:#777;line-height:12px">Cari pengajuan...</span>
<div class="abs" style="left:10px;top:428.6px;width:279px;height:41.6px;border-radius:9px;background:#fff;box-shadow:0 1px 4px rgba(0,0,0,.16),0 0 1px rgba(0,0,0,.12)"></div>
<span class="t" style="left:20.600px;top:444.4px;font-size:10.300px;font-weight:bold;color:#333;line-height:11px;letter-spacing:-.08px">Pengadaan Laptop</span>
<div class="abs" style="left:225.0px;top:439.2px;width:53.5px;height:20.800px;border-radius:8.500px;background:#e3f2e4"></div>
<span class="t" style="left:225.0px;width:53.5px;text-align:center;top:444.9px;font-size:9px;font-weight:bold;color:#4caf50;line-height:10px">Disetujui</span>
<div class="abs" style="left:10px;top:478.6px;width:279px;height:41.6px;border-radius:9px;background:#fff;box-shadow:0 1px 4px rgba(0,0,0,.16),0 0 1px rgba(0,0,0,.12)"></div>
<span class="t" style="left:20.600px;top:494.4px;font-size:10.300px;font-weight:bold;color:#333;line-height:11px;letter-spacing:-.08px">Pengadaan Printer</span>
<div class="abs" style="left:217.5px;top:489.2px;width:61.0px;height:20.800px;border-radius:8.500px;background:#ffecd1"></div>
<span class="t" style="left:217.5px;width:61.0px;text-align:center;top:494.9px;font-size:9px;font-weight:bold;color:#ff9800;line-height:10px">Menunggu</span>
<div class="abs" style="left:10px;top:528.7px;width:279px;height:41.6px;border-radius:9px;background:#fff;box-shadow:0 1px 4px rgba(0,0,0,.16),0 0 1px rgba(0,0,0,.12)"></div>
<span class="t" style="left:20.600px;top:544.5px;font-size:10.300px;font-weight:bold;color:#333;line-height:11px;letter-spacing:-.08px">Pengadaan Kursi</span>
<div class="abs" style="left:232.8px;top:539.3px;width:45.7px;height:20.800px;border-radius:8.500px;background:#fddfdd"></div>
<span class="t" style="left:232.8px;width:45.7px;text-align:center;top:545.0px;font-size:9px;font-weight:bold;color:#f44336;line-height:10px">Ditolak</span>
<div class="abs" style="left:10px;top:578.8px;width:279px;height:41.6px;border-radius:9px;background:#fff;box-shadow:0 1px 4px rgba(0,0,0,.16),0 0 1px rgba(0,0,0,.12)"></div>
<span class="t" style="left:20.600px;top:594.5px;font-size:10.300px;font-weight:bold;color:#333;line-height:11px;letter-spacing:-.08px">Pengadaan Meja</span>
<div class="abs" style="left:225.0px;top:589.4px;width:53.5px;height:20.800px;border-radius:8.500px;background:#e3f2e4"></div>
<span class="t" style="left:225.0px;width:53.5px;text-align:center;top:595.0px;font-size:9px;font-weight:bold;color:#4caf50;line-height:10px">Disetujui</span>
<div class="abs" style="left:114px;top:638.800px;width:71px;height:2.400px;border-radius:1.200px;background:#6a6a6a"></div>
</div>

<div id="emu">
  <svg class="abs" style="left:0;top:0" width="66" height="535" viewBox="1448 92 66 535" fill="none" stroke="#5f7f8f" stroke-width="1.400" stroke-linecap="round" stroke-linejoin="round">
    <path d="M1462.500 106.500h7M1491.300 103.300l6.400 6.400M1497.700 103.300l-6.400 6.400" stroke-width="1.200"/>
    <!-- power -->
    <path d="M1480 132.500v8.500M1475 135.300a8.300 8.300 0 1 0 10 0"/>
    <!-- vol up -->
    <path d="M1470.500 182.800h4l6.200-4.500v16.400l-6.200-4.500h-4zM1484.300 182.600a5 5 0 0 1 0 7.800M1487 178.800a10 10 0 0 1 0 15.400"/>
    <!-- vol down -->
    <path d="M1470.500 228.400h4l6.200-4.500v16.400l-6.200-4.500h-4zM1484.300 228.200a5 5 0 0 1 0 7.800"/>
    <!-- camera -->
    <path d="M1471.500 272.800h3.800l1.800-2.600h6.200l1.800 2.600h3.800a1.600 1.600 0 0 1 1.600 1.600v10.800a1.600 1.600 0 0 1-1.600 1.600h-17.400a1.600 1.600 0 0 1-1.600-1.600v-10.800a1.600 1.600 0 0 1 1.600-1.600z"/><circle cx="1480" cy="279.700" r="3.700"/><circle cx="1487" cy="275.800" r=".5"/>
    <!-- zoom -->
    <circle cx="1478.200" cy="321" r="7.300"/><path d="M1483.500 326.500l5.500 5.700M1474.500 321h7.400M1478.200 317.300v7.400"/>
    <!-- rotate left -->
    <rect x="1470" y="361.500" width="9.500" height="17" rx="1.300"/><path d="M1474 364.300h1.500M1483 378.500c6.500-2 7.500-12 .5-16.500M1483.500 366v-4.200h4.200" />
    <!-- rotate right -->
    <rect x="1480.500" y="407" width="9.500" height="17" rx="1.300"/><path d="M1484.500 409.800h1.500M1477 424c-6.500-2-7.500-12-.5-16.500M1476.500 411.500v-4.200h-4.200"/>
    <!-- back -->
    <path d="M1485.500 455v13l-11.300-6.500z"/>
    <!-- home -->
    <circle cx="1480" cy="507.200" r="7.400"/>
    <!-- overview -->
    <rect x="1474.300" y="547.700" width="11.400" height="11.400" rx=".8"/>
    <g fill="#5f7f8f" stroke="none"><circle cx="1473.500" cy="599" r="1.900"/><circle cx="1480" cy="599" r="1.900"/><circle cx="1486.500" cy="599" r="1.900"/></g>
  </svg>
</div>

</body>
</html>
